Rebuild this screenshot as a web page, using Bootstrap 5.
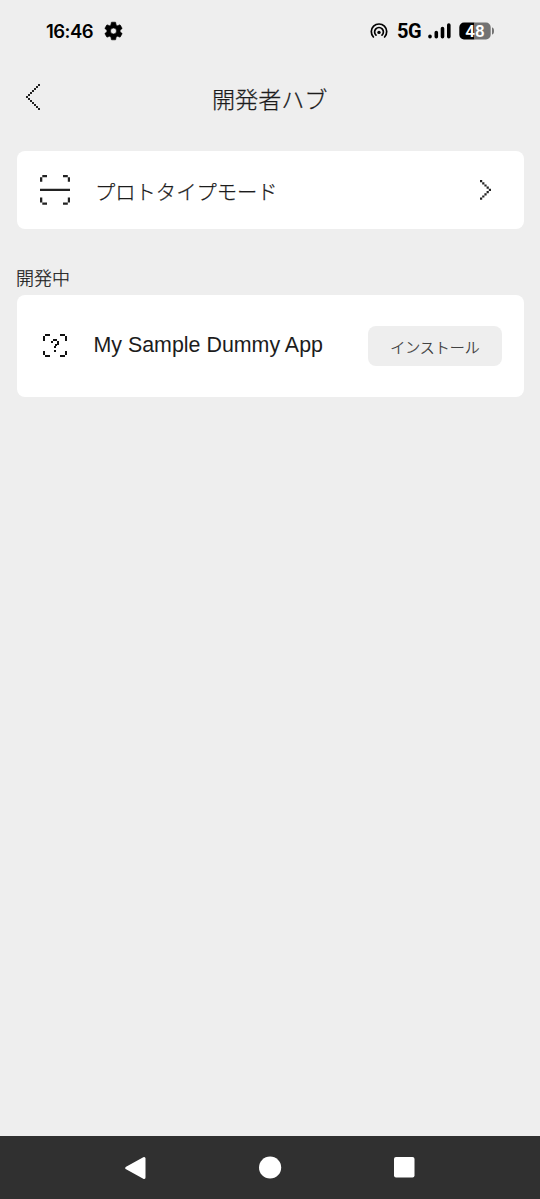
<!DOCTYPE html>
<html lang="ja">
<head>
<meta charset="utf-8">
<meta name="viewport" content="width=device-width, initial-scale=1">
<title>開発者ハブ</title>
<link href="https://cdn.jsdelivr.net/npm/bootstrap@5.3.0/dist/css/bootstrap.min.css" rel="stylesheet">
<style>
body{background:#eee;color:#1c1c1c;font-family:"Liberation Sans","Noto Sans CJK JP",sans-serif;font-weight:300;line-height:1.2}
svg{display:block;flex:none}
.screen{height:1199px;width:540px}
.status{height:62px;padding:0 45px 0 46px;color:#000}
.clock{font:600 18.5px/22px Inter,sans-serif;letter-spacing:-.55px;width:56px;white-space:nowrap}
.network{font:700 20px/22px Roboto,sans-serif;letter-spacing:-.4px;width:25px;margin-left:9px}
.signal{margin:0 -1px 0 6px}
.topbar{height:89px;padding-left:25px;padding-top:22px}
.topbar svg{margin-right:172px}
.title{font-size:23.1px;line-height:30px;padding-top:1px;white-space:nowrap}
.title,.mode-name,.section-name,.btn-install{-webkit-text-stroke:.25px currentColor}
.panel{margin:0 16.5px;background:#fff;border:0;border-radius:8px}
.mode{height:78px;padding:0 32px 0 23.5px}
.mode-name{font-size:20.3px;margin-left:25px;padding-top:7px;white-space:nowrap}
.section-name{font-size:18px;line-height:22px;margin:39px 16px 5px;white-space:nowrap}
.app{height:101.5px;padding:0 21.5px 0 26.5px}
.app-name{font-size:21.4px;margin-left:26.5px;padding-top:1px;white-space:nowrap}
.btn-install{width:134px;height:40px;border:0;border-radius:8px;background:#eee;color:#333;font-size:15px;font-weight:300;line-height:24px;padding:10px 0 6px}
.system-nav{height:63px;background:#303030;padding:0 125px}
</style>
</head>
<body>
<div class="screen d-flex flex-column">
<header class="status d-flex align-items-center">
<span class="clock">16:46</span>
<svg width="23" height="22" viewBox="0 0 24 24"><path fill="#000" stroke="#000" stroke-width=".7" d="M19.14 12.94c.04-.3.06-.61.06-.94 0-.32-.02-.64-.07-.94l2.03-1.58a.49.49 0 0 0 .12-.61l-1.92-3.32a.49.49 0 0 0-.59-.22l-2.39.96a7 7 0 0 0-1.62-.94l-.36-2.54a.48.48 0 0 0-.48-.41h-3.84a.48.48 0 0 0-.47.41l-.36 2.54a7.2 7.2 0 0 0-1.62.94l-2.39-.96a.48.48 0 0 0-.59.22L2.74 8.87a.48.48 0 0 0 .12.61l2.03 1.58a7 7 0 0 0 0 1.88l-2.03 1.58a.49.49 0 0 0-.12.61l1.92 3.32c.12.22.37.29.59.22l2.39-.96c.5.38 1.03.7 1.62.94l.36 2.54c.05.24.24.41.48.41h3.84c.24 0 .44-.17.47-.41l.36-2.54a7.2 7.2 0 0 0 1.62-.94l2.39.96c.22.08.47 0 .59-.22l1.92-3.32a.48.48 0 0 0-.12-.61zM12 15.3A3.3 3.3 0 1 1 12 8.7a3.3 3.3 0 0 1 0 6.6z"/></svg>
<svg class="ms-auto" width="18" height="16" viewBox="0 0 18 16" fill="none" stroke="#000" stroke-width="1.7" stroke-linecap="round"><path d="M3.4 14a7.7 7.7 0 1 1 11.2 0M6 12.1a4.4 4.4 0 1 1 6 0"/><circle cx="9" cy="9.4" r="1.7" fill="#000" stroke="none"/></svg>
<span class="network">5G</span>
<svg class="signal" width="24" height="18" viewBox="0 0 24 18" stroke="#000" stroke-width="3.6" stroke-linecap="round"><path d="M2 14.2v.6M8.3 10.5v4.3M14.5 6.6v8.2M20.8 3v11.8"/></svg>
<svg class="ms-2" width="36" height="18" viewBox="0 0 36 18"><path d="M5 .5h10.5v17H5a4.7 4.7 0 0 1-4.7-4.7V5.2A4.7 4.7 0 0 1 5 .5z"/><path fill="#737373" d="M15.5.5H27a4.7 4.7 0 0 1 4.7 4.7v7.6a4.7 4.7 0 0 1-4.7 4.7H15.5zM33 5.5q2 .2 2 3.5t-2 3.5z"/><text x="16" y="15" text-anchor="middle" fill="#fff" font-family="Roboto" font-weight="600" font-size="17">48</text></svg>
</header>
<div class="topbar d-flex align-items-start">
<svg width="15" height="26" viewBox="0 0 15 26" fill="#222"><path d="M13 0h2v2h-2zM11 2h2v2h-2zM9 4h2v2H9zM7 6h2v2H7zM5 8h2v2H5zM3 10h2v2H3zM1 12h2v2H1zM3 14h2v2H3zM5 16h2v2H5zM7 18h2v2H7zM9 20h2v2H9zM11 22h2v2h-2zM13 24h2v2h-2z"/></svg>
<h1 class="title fw-light mb-0">開発者ハブ</h1>
</div>
<main class="flex-grow-1">
<div class="panel card mode flex-row align-items-center">
<svg width="30" height="30" viewBox="0 0 30 30" fill="#222"><path d="M2.3 0H7v2.2H2.3zM0 2.2h2.3v4.6H0zM23 0h4.8v2.2H23zM27.8 2.2H30v4.6h-2.2zM0 13.8h30V16H0zM0 22.5h2.3v5H0zM2.3 27.5H7v2.3H2.3zM27.8 22.5H30v5h-2.2zM23 27.5h4.8v2.3H23z"/></svg>
<span class="mode-name">プロトタイプモード</span>
<svg class="ms-auto" width="12" height="20" viewBox="0 0 12 20" fill="#222"><path d="M0 0h2.2v2.2H0zM2.2 2.2h2.2v2.2H2.2zM4.4 4.4h2.2v2.2H4.4zM6.6 6.6h2.2v2.2H6.6zM8.8 8.8H11V11H8.8zM6.6 11h2.2v2.2H6.6zM4.4 13.2h2.2v2.2H4.4zM2.2 15.4h2.2v2.2H2.2zM0 17.6h2.2v2.2H0z"/></svg>
</div>
<h2 class="section-name fw-light">開発中</h2>
<div class="panel card app flex-row align-items-center">
<svg width="24" height="24" viewBox="0 0 24 24" fill="#111"><path d="M2 0h5v2H2zM0 2h2v5H0zM17 0h5v2h-5zM22 2h2v5h-2zM0 17h2v4H0zM2 21h5v2H2zM22 17h2v4h-2zM17 21h5v2h-5zM10 5h4v2h-4zM8 7h2v2H8zM14 7h2v4h-2zM12 10h2v2h-2zM11 12h2v2h-2zM11 16h2v2h-2z"/></svg>
<span class="app-name">My Sample Dummy App</span>
<button type="button" class="btn btn-install ms-auto">インストール</button>
</div>
</main>
<nav class="system-nav d-flex align-items-center justify-content-between">
<svg width="21" height="24" viewBox="0 0 21 24"><path fill="#fff" stroke="#fff" stroke-width="3" stroke-linejoin="round" d="M1.8 12 19 2.5v19z"/></svg>
<svg width="23" height="23" viewBox="0 0 23 23"><circle cx="11.1" cy="11.5" r="11.1" fill="#fff"/></svg>
<svg width="21" height="21" viewBox="0 0 21 21"><rect width="20.5" height="20.5" rx="2" fill="#fff"/></svg>
</nav>
</div>
<script src="https://cdn.jsdelivr.net/npm/bootstrap@5.3.0/dist/js/bootstrap.bundle.min.js"></script>
</body>
</html>
